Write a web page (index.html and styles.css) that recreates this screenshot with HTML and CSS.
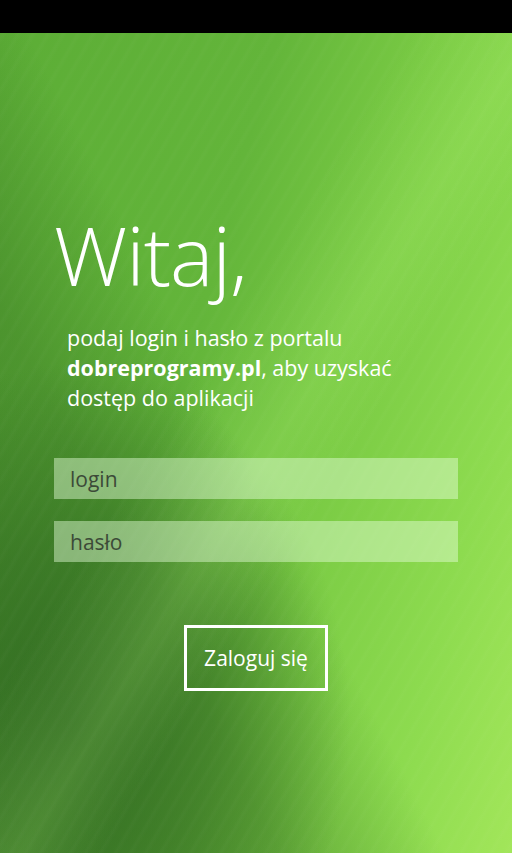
FILE: index.html
```html
<!DOCTYPE html>
<html lang="pl">
<head>
<meta charset="utf-8">
<title>Logowanie</title>
<link rel="stylesheet" href="styles.css">
</head>
<body>
<div class="status-bar"></div>
<main class="screen">
  <h1 class="title">Witaj,</h1>
  <p class="intro">podaj login i hasło z portalu <strong>dobreprogramy.pl</strong>, aby uzyskać dostęp do aplikacji</p>
  <form class="form">
    <input class="field" type="text" placeholder="login">
    <input class="field" type="password" placeholder="hasło">
    <div class="actions">
      <button class="login-btn" type="button">Zaloguj się</button>
    </div>
  </form>
</main>
</body>
</html>
```
FILE: styles.css
```css
html, body {
  margin: 0;
  padding: 0;
  height: 100%;
}
body {
  background: #000;
  font-family: "Open Sans", "Noto Sans", sans-serif;
  color: #fff;
  overflow: hidden;
}
.status-bar {
  height: 33px;
  background: #000;
}
.screen {
  height: 820px;
  box-sizing: border-box;
  padding: 0 54px;
  display: flex;
  flex-direction: column;
  background:
    repeating-linear-gradient(120deg, rgba(255,255,255,0) 0px, rgba(255,255,255,0.02) 3px, rgba(255,255,255,0) 7px, rgba(255,255,255,0) 13px),
    linear-gradient(122deg, rgba(255,255,255,0) 40%, rgba(190,255,130,0.16) 52%, rgba(255,255,255,0) 60%),
    radial-gradient(ellipse 280px 360px at 70px 690px, rgba(45,100,32,0.78) 0%, rgba(45,100,32,0.48) 50%, rgba(45,100,32,0) 100%),
    linear-gradient(63deg, rgba(45,100,30,0.55) 0%, rgba(45,100,30,0.35) 30%, rgba(45,100,30,0.08) 44%, rgba(45,100,30,0) 48%),
    linear-gradient(105deg, #5cad36 0%, #63b53a 38%, #7acb44 60%, #8ddb4f 82%, #a2e65a 100%);
}
.title {
  margin: 171px 0 0 0;
  font-weight: 300;
  font-size: 82px;
  line-height: 100px;
  letter-spacing: -1px;
}
.intro {
  margin: 19px 0 0 13px;
  font-size: 21.5px;
  line-height: 30px;
  max-width: 345px;
}
.intro strong {
  font-weight: 700;
}
.form {
  margin-top: 45px;
  display: flex;
  flex-direction: column;
  gap: 22px;
}
.field {
  height: 41px;
  box-sizing: border-box;
  border: none;
  outline: none;
  margin: 0;
  padding: 0 16px;
  background: rgba(230, 255, 220, 0.45);
  font-family: inherit;
  font-size: 21px;
  color: #333;
}
.field::placeholder {
  color: #3c4a38;
  opacity: 1;
}
.actions {
  display: flex;
  justify-content: center;
  margin-top: 41px;
}
.login-btn {
  width: 144px;
  height: 66px;
  box-sizing: border-box;
  border: 3px solid #fff;
  background: transparent;
  color: #fff;
  font-family: inherit;
  font-size: 21px;
  padding: 0;
}
```
